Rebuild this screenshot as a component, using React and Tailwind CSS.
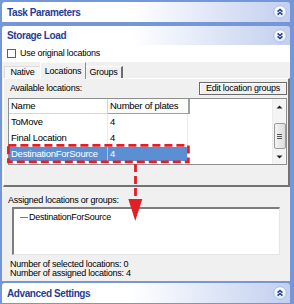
import React from "react";

const rows = [
  { name: "ToMove", plates: 4 },
  { name: "Final Location", plates: 4 },
  { name: "DestinationForSource", plates: 4, selected: true },
];

function Chevrons({ down }) {
  return (
    <svg width="14" height="14" viewBox="0 0 14 14">
      <defs>
        <linearGradient id={down ? "cg-d" : "cg-u"} x1="0" y1="0" x2="0" y2="1">
          <stop offset="0" stopColor="#ffffff" />
          <stop offset="1" stopColor="#dfe7f7" />
        </linearGradient>
      </defs>
      <circle cx="7" cy="7" r="6.3" fill={`url(#${down ? "cg-d" : "cg-u"})`} stroke="#a8bbe3" strokeWidth="1" />
      {down ? (
        <g fill="none" stroke="#21408f" strokeWidth="1.5">
          <path d="M4.6 4.4 L7 6.6 L9.4 4.4" />
          <path d="M4.6 7.4 L7 9.6 L9.4 7.4" />
        </g>
      ) : (
        <g fill="none" stroke="#21408f" strokeWidth="1.5">
          <path d="M4.6 6.6 L7 4.4 L9.4 6.6" />
          <path d="M4.6 9.6 L7 7.4 L9.4 9.6" />
        </g>
      )}
    </svg>
  );
}

function PaneHeader({ title, down, height }) {
  return (
    <div
      className={`flex items-center ${height} rounded-t-[3px] bg-linear-to-r from-white from-45% to-[#c2cfee] pl-[5px] pr-[3px]`}
    >
      <span className="flex-1 text-[10px] font-bold tracking-[-0.4px] text-[#1f3e94]">
        {title}
      </span>
      <Chevrons down={down} />
    </div>
  );
}

function Scrollbar() {
  return (
    <div className="w-[14px] bg-[#f4f4f4] border-l border-[#ececec] flex flex-col items-center">
      <div className="h-[14px] flex items-center justify-center mt-[1px]">
        <svg width="7" height="4" viewBox="0 0 7 4">
          <path d="M0.5 3.5 L3.5 0.5 L6.5 3.5 Z" fill="#222" />
        </svg>
      </div>
      <div className="mt-[9px] w-[12px] h-[26px] rounded-[2px] border border-[#9b9b9b] bg-linear-to-r from-[#f3f3f3] to-[#dcdcdc] flex flex-col items-center justify-center gap-[1px]">
        <div className="w-[5px] h-px bg-[#555]" />
        <div className="w-[5px] h-px bg-[#555]" />
        <div className="w-[5px] h-px bg-[#555]" />
      </div>
      <div className="flex-1 flex items-center justify-center">
        <svg width="7" height="4" viewBox="0 0 7 4">
          <path d="M0.5 0.5 L3.5 3.5 L6.5 0.5 Z" fill="#222" />
        </svg>
      </div>
    </div>
  );
}

function LocationList() {
  return (
    <div className="ml-[4px] mr-[1px] mt-[3px] h-[67px] border border-[#8e8f8f] bg-white flex">
      <div className="flex-1 flex flex-col text-[9.5px] leading-none">
        <div className="flex h-[15px]">
          <div className="w-[99px] border-r border-b border-[#d5d5d5] pl-[2px] flex items-center">
            Name
          </div>
          <div className="w-[82px] border-r-2 border-b border-[#9f9f9f] pl-[2px] flex items-center bg-[#fbfbfb]">
            Number of plates
          </div>
        </div>
        {rows.map((r) => (
          <div key={r.name} className="flex h-[16px]">
            <div
              className={`w-[99px] border-r pl-[2px] flex items-center ${
                r.selected
                  ? "bg-[#5a8fd4] text-white border-[#a9c6ea] my-px"
                  : "border-[#ebebeb]"
              }`}
            >
              {r.name}
            </div>
            <div
              className={`w-[80px] border-r border-[#ebebeb] pl-[2px] flex items-center ${
                r.selected ? "bg-[#5a8fd4] text-white my-px" : ""
              }`}
            >
              {r.plates}
            </div>
          </div>
        ))}
      </div>
      <Scrollbar />
    </div>
  );
}

function Annotation() {
  return (
    <svg
      className="absolute left-0 top-0 pointer-events-none"
      width="294"
      height="304"
      viewBox="0 0 294 304"
    >
      <rect
        x="8.4"
        y="145.4"
        width="180"
        height="16.4"
        fill="none"
        stroke="#e41e26"
        strokeWidth="2.7"
        strokeDasharray="8 4"
      />
      <path
        d="M135.5 164 L135.5 199"
        stroke="#e41e26"
        strokeWidth="2.8"
        strokeDasharray="8 4"
      />
      <path d="M128.3 199 L142.3 199 L135.3 221 Z" fill="#e41e26" />
    </svg>
  );
}

export default function App() {
  return (
    <div className="relative w-[294px] h-[304px] overflow-hidden bg-[#7597d7] pl-[2px] pr-[4px] pt-[2px] font-['Liberation_Sans',Arial,sans-serif] text-black">
      <PaneHeader title="Task Parameters" height="h-[20px]" />
      <div className="mt-[4px]">
        <PaneHeader title="Storage Load" down height="h-[19px]" />
      </div>

      <div className="h-[236px] bg-[#f0f0f0] flex flex-col text-[9px] tracking-[-0.25px]">
        <div className="h-[17px] bg-white flex items-center pl-[5px] gap-[4px]">
          <div className="w-[9px] h-[9px] border border-[#5f5f5f] bg-white" />
          <span>Use original locations</span>
        </div>

        <div className="h-[16px] flex items-end pl-[2px]">
          <div className="w-[36px] h-[12px] border-t border-l border-[#dcdcdc] bg-[#f7f7f7] flex items-center justify-center">
            Native
          </div>
          <div className="relative z-10 w-[46px] h-[17px] -mb-px border-t border-l border-white border-r border-r-[#8a8a8a] bg-[#f0f0f0] flex items-start justify-center pt-[2px]">
            Locations
          </div>
          <div className="w-[37px] h-[12px] border-t border-white border-r-2 border-r-[#6d6d6d] bg-[#f0f0f0] flex items-center justify-center">
            Groups
          </div>
        </div>

        <div className="ml-[1px] h-[109px] border-t border-l border-white border-r-2 border-b-2 border-r-[#737373] border-b-[#737373] flex flex-col">
          <div className="mt-[3px] h-[13px] flex items-center">
            <span className="pl-[6px] flex-1">Available locations:</span>
            <div className="w-[88px] h-[13px] mr-[1px] border border-[#6a6a6a] bg-[#f0f0f0] shadow-[inset_1px_1px_0_#fff] flex items-center justify-center">
              Edit location groups
            </div>
          </div>
          <LocationList />
        </div>

        <div className="pt-[8px] pl-[6px] leading-[11px]">
          Assigned locations or groups:
        </div>
        <div className="ml-[10px] mt-[1px] w-[268px] h-[48px] bg-white border-t-2 border-l-2 border-[#7d7d7d] border-r border-b border-r-[#e6e6e6] border-b-[#e6e6e6] pt-[3px]">
          <div className="flex items-center h-[11px]">
            <div className="w-[8px] h-px bg-[#7a7a7a] ml-[6px] mr-[1px]" />
            <span>DestinationForSource</span>
          </div>
        </div>
        <div className="mt-[5px] pl-[8px] leading-[9px]">
          <div>Number of selected locations: 0</div>
          <div>Number of assigned locations: 4</div>
        </div>
      </div>

      <div className="mt-[2px]">
        <PaneHeader title="Advanced Settings" height="h-[20px]" />
      </div>

      <Annotation />
    </div>
  );
}
